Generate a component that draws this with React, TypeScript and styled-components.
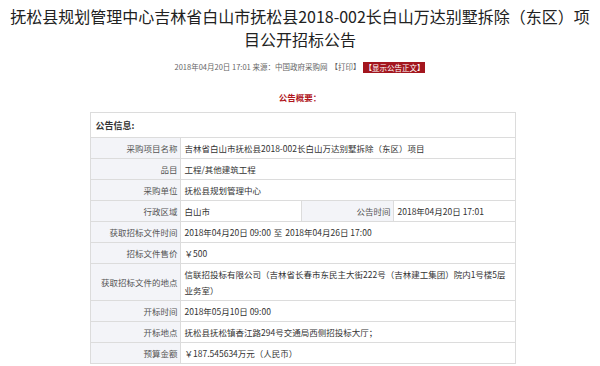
import React from "react";
import styled, { createGlobalStyle } from "styled-components";

const Global = createGlobalStyle`
  html, body { margin: 0; padding: 0; background: #fff; }
  body { font-family: "Noto Sans CJK SC", "Noto Sans", sans-serif; color: #333; }
`;

const Page = styled.div`
  width: 600px;
  display: flex;
  flex-direction: column;
  align-items: center;
`;

const Title = styled.h1`
  margin: 0;
  padding-top: 5px;
  font-size: 16px;
  line-height: 23px;
  font-weight: 400;
  color: #222;
  text-align: center;
`;

const Meta = styled.div`
  margin-top: 10px;
  font-size: 7.5px;
  line-height: 12px;
  color: #666;
  display: flex;
  align-items: center;
  gap: 3px;
`;

const RedButton = styled.span`
  background: #a3161e;
  color: #fff;
  padding: 0 1px;
  line-height: 11px;
`;

const Summary = styled.div`
  margin-top: 18px;
  font-size: 8.5px;
  line-height: 12px;
  font-weight: 700;
  color: #b0161c;
`;

const Table = styled.table`
  margin-top: 9px;
  margin-left: 5px;
  width: 425px;
  border-collapse: collapse;
  table-layout: fixed;
  font-size: 8.5px;
  border: 1px solid #dcdcdc;
`;

const HeadCell = styled.td`
  height: 24px;
  padding: 0 5px;
  font-weight: 700;
  font-size: 9px;
  color: #333;
  border: 1px solid #dcdcdc;
`;

const Label = styled.td`
  background: #f3f4f8;
  color: #555;
  text-align: right;
  padding: 2px;
  line-height: 16px;
  border: 1px solid #dcdcdc;
  white-space: nowrap;
`;

const Value = styled.td`
  color: #333;
  text-align: left;
  padding: 2px 4px;
  line-height: 16px;
  border: 1px solid #dcdcdc;
  white-space: nowrap;
`;

const Gap = styled.span<{ $w: number }>`
  display: inline-block;
  width: ${(p) => p.$w}px;
`;

export default function App() {
  return (
    <>
      <Global />
      <Page>
        <Title>
          抚松县规划管理中心吉林省白山市抚松县2018-002长白山万达别墅拆除（东区）项
          <br />
          目公开招标公告
        </Title>
        <Meta>
          <span>2018年04月20日 17:01 来源：中国政府采购网</span>
          <span>【打印】</span>
          <RedButton>【显示公告正文】</RedButton>
        </Meta>
        <Summary>公告概要：</Summary>
        <Table>
          <colgroup>
            <col style={{ width: 90 }} />
            <col style={{ width: 121 }} />
            <col style={{ width: 92 }} />
            <col style={{ width: 122 }} />
          </colgroup>
          <tbody>
            <tr>
              <HeadCell colSpan={4}>公告信息:</HeadCell>
            </tr>
            <tr>
              <Label>采购项目名称</Label>
              <Value colSpan={3}>吉林省白山市抚松县2018-002长白山万达别墅拆除（东区）项目</Value>
            </tr>
            <tr>
              <Label>品目</Label>
              <Value colSpan={3}>工程/其他建筑工程</Value>
            </tr>
            <tr>
              <Label>采购单位</Label>
              <Value colSpan={3}>抚松县规划管理中心</Value>
            </tr>
            <tr>
              <Label>行政区域</Label>
              <Value>白山市</Value>
              <Label>公告时间</Label>
              <Value>2018年04月20日 17:01</Value>
            </tr>
            <tr>
              <Label>获取招标文件时间</Label>
              <Value colSpan={3}>
                2018年04月20日 09:00 <Gap $w={1} />至<Gap $w={1} /> 2018年04月26日 17:00
              </Value>
            </tr>
            <tr>
              <Label>招标文件售价</Label>
              <Value colSpan={3}>￥500</Value>
            </tr>
            <tr>
              <Label>获取招标文件的地点</Label>
              <Value colSpan={3}>
                信联招投标有限公司（吉林省长春市东民主大街222号（吉林建工集团）院内1号楼5层
                <br />
                业务室）
              </Value>
            </tr>
            <tr>
              <Label>开标时间</Label>
              <Value colSpan={3}>2018年05月10日 09:00</Value>
            </tr>
            <tr>
              <Label>开标地点</Label>
              <Value colSpan={3}>抚松县抚松镇香江路294号交通局西侧招投标大厅；</Value>
            </tr>
            <tr>
              <Label>预算金额</Label>
              <Value colSpan={3}>￥187.545634万元（人民币）</Value>
            </tr>
          </tbody>
        </Table>
      </Page>
    </>
  );
}
